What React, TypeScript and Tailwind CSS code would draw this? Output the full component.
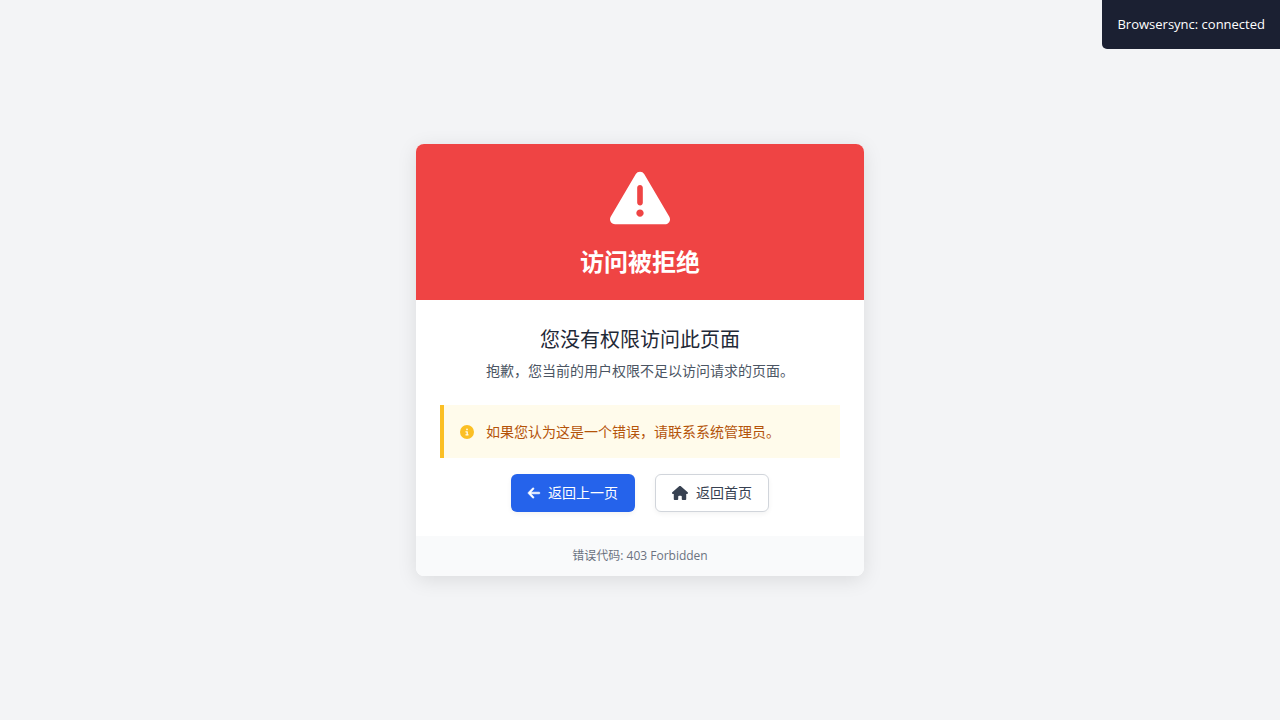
import React from "react";
import { FaArrowLeft, FaHouse, FaCircleInfo } from "react-icons/fa6";

function WarningIcon() {
  return (
    <svg viewBox="0 0 512 512" fill="currentColor" className="size-[60px]" aria-hidden="true">
      <path d="M506.3 417l-213.3-364c-16.33-28-57.54-28-73.98 0l-213.2 364C-10.59 444.9 9.849 480 42.74 480h426.6C502.1 480 522.6 445 506.3 417zM232 168c0-13.25 10.75-24 24-24S280 154.8 280 168v128c0 13.25-10.75 24-23.1 24S232 309.3 232 296V168zM256 416c-17.36 0-31.44-14.08-31.44-31.44c0-17.36 14.07-31.44 31.44-31.44s31.44 14.08 31.44 31.44C287.4 401.9 273.4 416 256 416z" />
    </svg>
  );
}

export default function App() {
  return (
    <div className="flex min-h-screen items-center justify-center bg-gray-100 font-['Open_Sans','Noto_Sans_CJK_SC',sans-serif]">
      <div
        role="status"
        className="fixed top-0 right-0 rounded-bl-[5px] bg-[#1b2032] p-[15px] text-[13px] leading-[19px] text-white"
      >
        Browsersync: connected
      </div>
      <main className="w-full max-w-md overflow-hidden rounded-lg bg-white shadow-[0_4px_20px_rgba(0,0,0,0.1)]">
        <header className="flex flex-col items-center bg-[#ef4444] px-6 pt-6 pb-5 text-white">
          <WarningIcon />
          <h1 className="mt-4 text-2xl leading-9 font-bold">访问被拒绝</h1>
        </header>
        <div className="p-6">
          <div className="mb-6 text-center">
            <h2 className="mb-1 text-xl leading-8 text-[#1f2937]">您没有权限访问此页面</h2>
            <p className="text-sm leading-[21px] text-[#4b5563]">抱歉，您当前的用户权限不足以访问请求的页面。</p>
          </div>
          <div className="mb-4 flex items-center gap-3 border-l-4 border-[#fbbf24] bg-[#fffbeb] p-4">
            <FaCircleInfo className="size-[14px] text-[#fbbf24]" aria-hidden="true" />
            <p className="text-sm leading-[21px] text-[#b45309]">如果您认为这是一个错误，请联系系统管理员。</p>
          </div>
          <div className="flex justify-center gap-5">
            <button type="button" className="flex items-center gap-2 rounded-md border border-transparent bg-[#2563eb] px-4 py-2 text-sm text-white shadow-[0_2px_5px_rgba(0,0,0,0.05)]">
              <FaArrowLeft className="h-[14px] w-3 overflow-visible stroke-current stroke-[20px]" aria-hidden="true" />
              返回上一页
            </button>
            <a href="#home" className="flex items-center gap-2 rounded-md border border-[#d1d5db] bg-white px-4 py-2 text-sm text-[#374151] shadow-[0_2px_5px_rgba(0,0,0,0.05)]">
              <FaHouse className="size-4" aria-hidden="true" />
              返回首页
            </a>
          </div>
        </div>
        <footer className="bg-[#f9fafb] px-6 py-3 text-center text-xs text-[#6b7280]">错误代码: 403 Forbidden</footer>
      </main>
    </div>
  );
}
